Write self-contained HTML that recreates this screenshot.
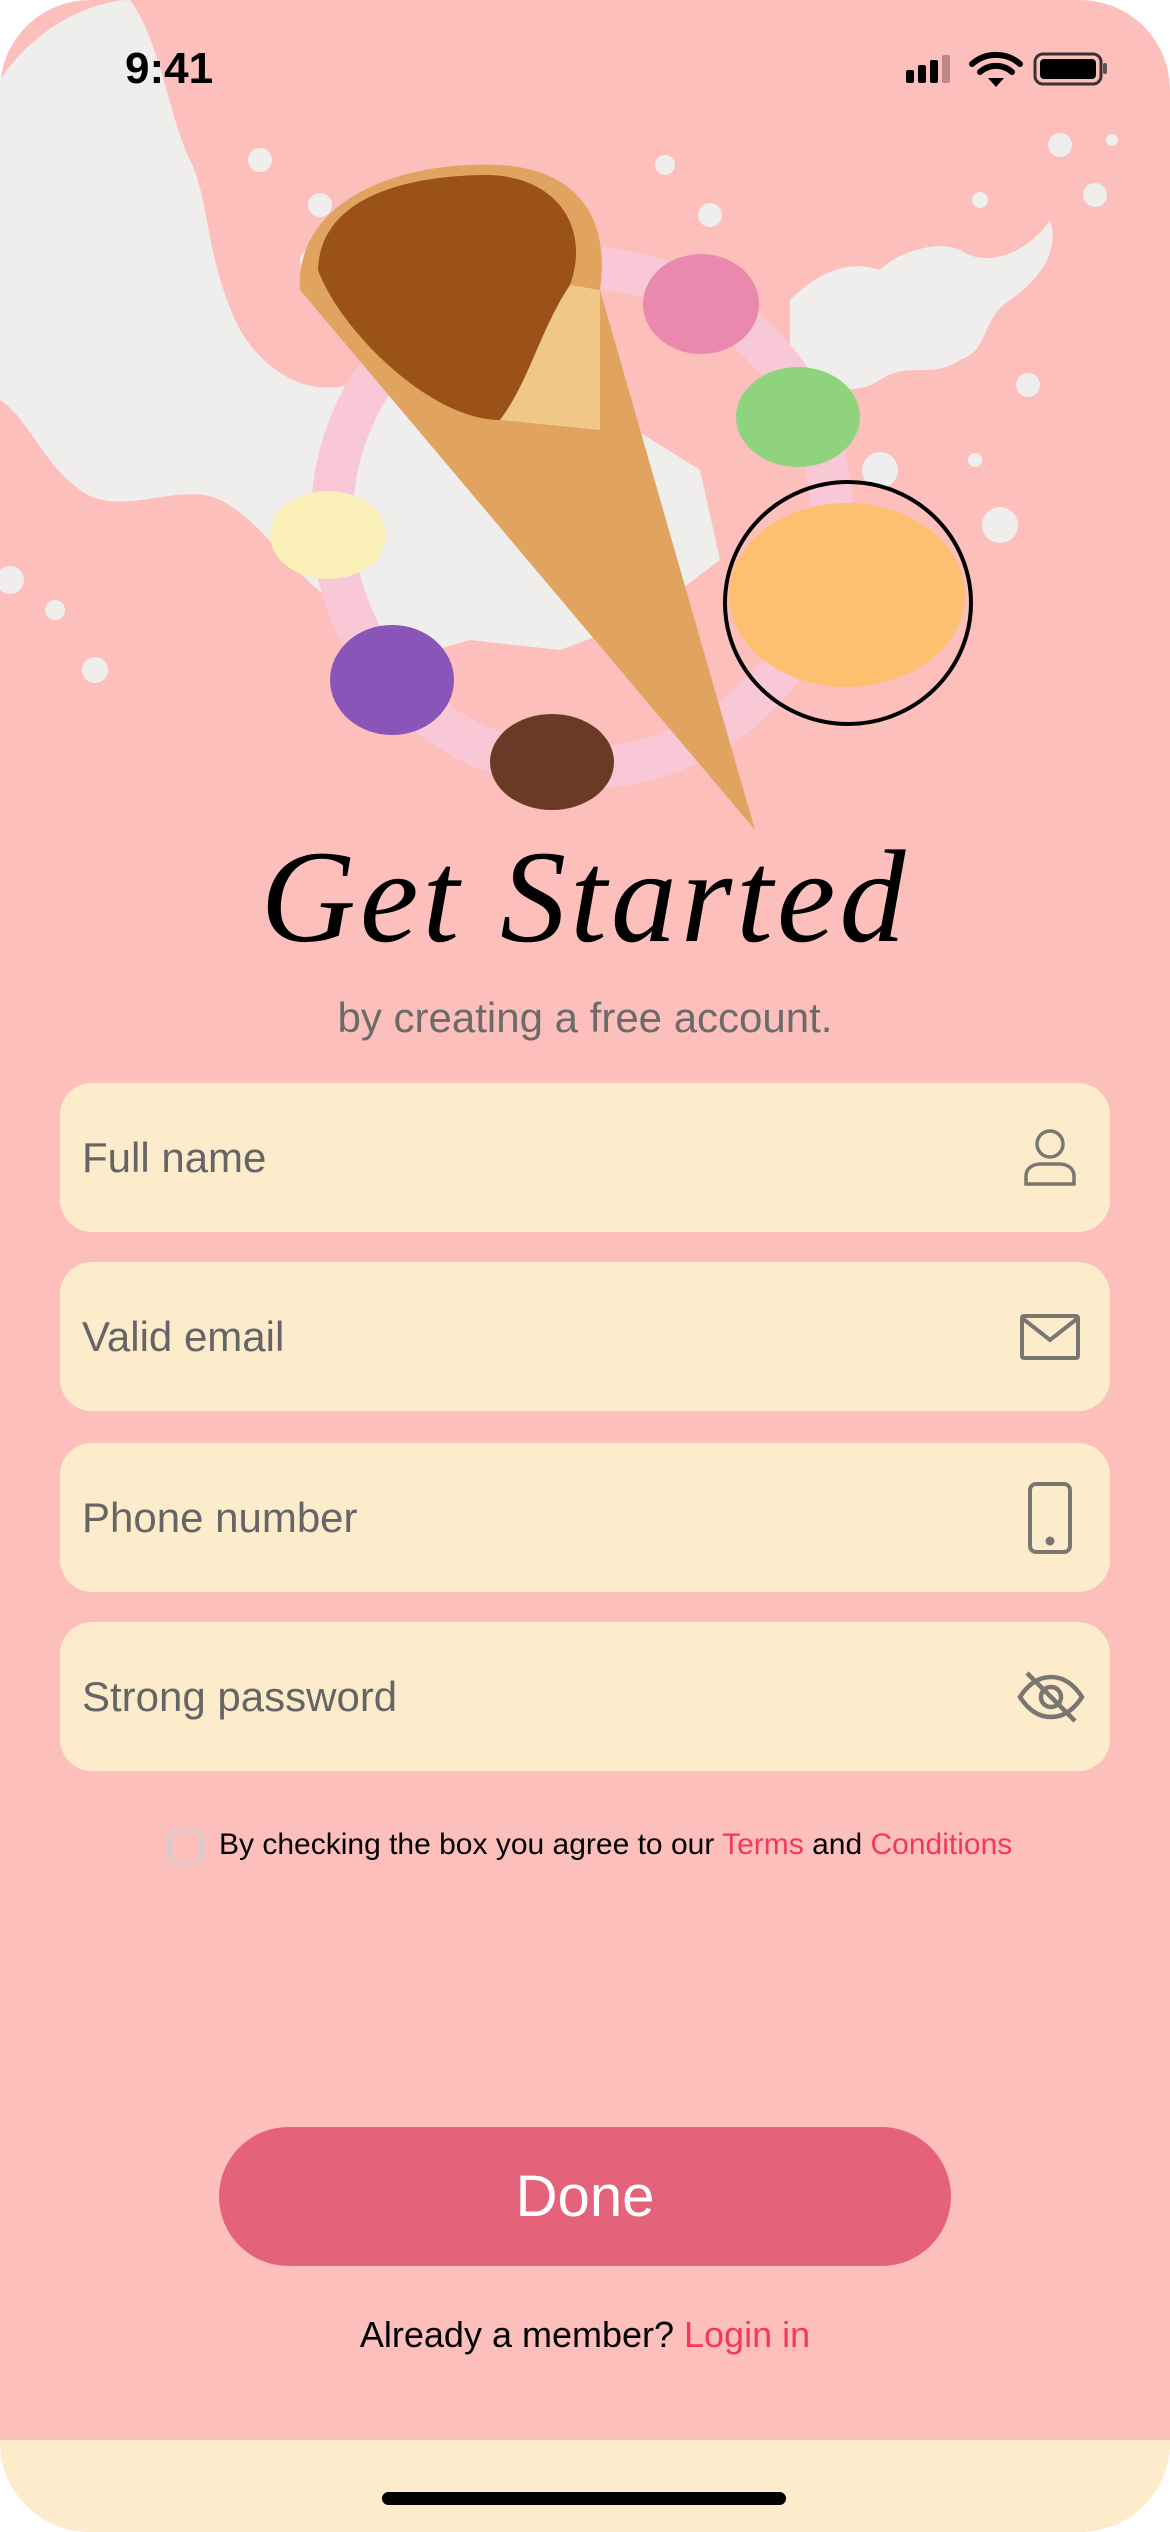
<!DOCTYPE html>
<html><head><meta charset="utf-8"><style>
*{margin:0;padding:0;box-sizing:border-box}
html,body{width:1170px;height:2532px;background:#fff;overflow:hidden}
.ph{position:absolute;left:0;top:0;width:1170px;height:2532px;background:#fdbfbc;border-radius:90px;overflow:hidden;font-family:"Liberation Sans",sans-serif}
.bottom{position:absolute;left:0;top:2440px;width:1170px;height:92px;background:#fdeccc}
.home{position:absolute;left:382px;top:2492px;width:404px;height:13px;border-radius:7px;background:#000}
.title{position:absolute;left:0;width:1170px;top:820px;text-align:center;font-family:"Liberation Serif",serif;font-style:italic;font-size:132px;color:#000;letter-spacing:4px}
.sub{position:absolute;left:0;width:1170px;top:994px;text-align:center;font-size:42px;color:#6b6b6b}
.in{position:absolute;left:60px;width:1050px;height:149px;background:#fdeccc;border-radius:32px}
.in span{position:absolute;left:22px;top:50%;transform:translateY(-50%);font-size:42px;color:#656565}
.in svg{position:absolute}
.chk{position:absolute;left:168px;top:1829px;width:35px;height:35px;border:3px solid #cfcfcf;border-radius:8px}
.terms{position:absolute;left:219px;top:1828px;font-size:30px;color:#000}
.red{color:#f23a57}
.btn{position:absolute;left:219px;top:2127px;width:732px;height:139px;border-radius:70px;background:#e5637a;color:#fff;font-size:58px;text-align:center;line-height:139px}
.al{position:absolute;left:0;width:1170px;top:2314px;text-align:center;font-size:36px;color:#000}
</style></head><body><div class="ph">
<svg width="1170" height="860" style="position:absolute;left:0;top:0" viewBox="0 0 1170 860">
<g fill="#efeeec">
<path d="M0,80 C40,20 100,0 130,0 C160,40 170,120 190,160 C210,200 205,260 240,330 C270,380 320,400 360,380 L420,380 L520,390 L620,420 L700,470 L720,560 L640,620 L560,650 L470,640 L400,660 L330,600 C280,560 260,520 220,500 C180,480 120,520 80,490 C40,460 30,420 0,400 Z"/>
<path d="M790,300 C820,270 850,260 880,270 C900,250 940,240 960,250 C990,270 1030,250 1050,220 C1060,250 1040,280 1010,300 C980,320 990,350 960,360 C930,380 910,360 880,380 C850,400 820,380 790,390 Z"/>
<circle cx="260" cy="160" r="12"/><circle cx="320" cy="205" r="12"/><circle cx="310" cy="260" r="10"/><circle cx="665" cy="165" r="10"/><circle cx="710" cy="215" r="12"/><circle cx="980" cy="200" r="8"/><circle cx="1095" cy="195" r="12"/><circle cx="1060" cy="145" r="12"/><circle cx="1112" cy="140" r="6"/><circle cx="1028" cy="385" r="12"/><circle cx="1000" cy="525" r="18"/><circle cx="975" cy="460" r="7"/><circle cx="95" cy="670" r="13"/><circle cx="55" cy="610" r="10"/><circle cx="10" cy="580" r="14"/><circle cx="880" cy="470" r="18"/>
</g>
<circle cx="582" cy="518" r="250" fill="none" stroke="#f9c8d6" stroke-width="42"/>
<path d="M300,290 C295,200 400,160 500,165 C580,170 610,220 600,290 L755,830 Z" fill="#e0a360"/>
<path d="M318,270 C320,200 400,175 490,175 C560,178 590,230 570,285 C540,330 530,380 500,420 C430,420 340,330 318,270 Z" fill="#9b5219"/>
<path d="M570,285 C540,330 530,380 500,420 L600,430 L600,290 Z" fill="#f0c787"/>
<ellipse cx="701" cy="304" rx="58" ry="50" fill="#e889ad"/>
<ellipse cx="798" cy="417" rx="62" ry="50" fill="#8fd37f"/>
<ellipse cx="328" cy="535" rx="58" ry="44" fill="#faf0b8"/>
<ellipse cx="392" cy="680" rx="62" ry="55" fill="#8a55b8"/>
<ellipse cx="552" cy="762" rx="62" ry="48" fill="#6b3a26"/>
<ellipse cx="847" cy="595" rx="118" ry="92" fill="#fdc070"/>
<ellipse cx="848" cy="603" rx="123" ry="121" fill="none" stroke="#000" stroke-width="4"/>
<text x="125" y="83" font-family="Liberation Sans,sans-serif" font-weight="bold" font-size="44" fill="#000">9:41</text>
<g fill="#000"><rect x="906" y="70" width="8" height="13" rx="2"/><rect x="918" y="65" width="8" height="18" rx="2"/><rect x="930" y="60" width="8" height="23" rx="2"/><rect x="942" y="55" width="8" height="28" rx="2" fill="#b88"/></g>
<path d="M972,64 A36,36 0 0,1 1020,64 M980,72 A24,24 0 0,1 1012,72" stroke="#000" stroke-width="6" fill="none" stroke-linecap="round"/><path d="M988,78 L1004,78 L996,87 Z" fill="#000"/>
<rect x="1035" y="54" width="66" height="30" rx="8" fill="none" stroke="#333" stroke-width="3"/><rect x="1040" y="59" width="56" height="20" rx="4" fill="#000"/><rect x="1103" y="63" width="4" height="11" rx="2" fill="#555"/>
</svg>
<div class="title">Get Started</div>
<div class="sub">by creating a free account.</div>
<div class="in" style="top:1083px"><span>Full name</span><svg style="left:963px;top:45px" width="54" height="58" viewBox="0 0 54 58" fill="none" stroke="#7a7670" stroke-width="3.5"><circle cx="27" cy="16" r="13"/><path d="M3,56 L3,48 C3,40 10,36 18,36 L36,36 C44,36 51,40 51,48 L51,56 Z"/></svg></div>
<div class="in" style="top:1262px"><span>Valid email</span><svg style="left:960px;top:52px" width="60" height="46" viewBox="0 0 60 46" fill="none" stroke="#7a7670" stroke-width="4"><rect x="2" y="2" width="56" height="42" rx="2"/><path d="M2,4 L30,26 L58,4"/></svg></div>
<div class="in" style="top:1443px"><span>Phone number</span><svg style="left:968px;top:39px" width="44" height="72" viewBox="0 0 44 72" fill="none" stroke="#7a7670" stroke-width="4"><rect x="2" y="2" width="40" height="68" rx="6"/><circle cx="22" cy="59" r="2.5" fill="#7a7670"/></svg></div>
<div class="in" style="top:1622px"><span>Strong password</span><svg style="left:957px;top:47px" width="68" height="56" viewBox="0 0 68 56" fill="none" stroke="#7a7670" stroke-width="4.5"><path d="M3,28 C12,14 22,8 34,8 C46,8 56,14 65,28 C56,42 46,48 34,48 C22,48 12,42 3,28 Z"/><circle cx="34" cy="28" r="10"/><path d="M10,4 L58,52"/></svg></div>
<div class="chk"></div>
<div class="terms">By checking the box you agree to our <span class="red">Terms</span> and <span class="red">Conditions</span></div>
<div class="btn">Done</div>
<div class="al">Already a member? <span class="red">Login in</span></div>
<div class="bottom"></div><div class="home"></div>
</div></body></html>
